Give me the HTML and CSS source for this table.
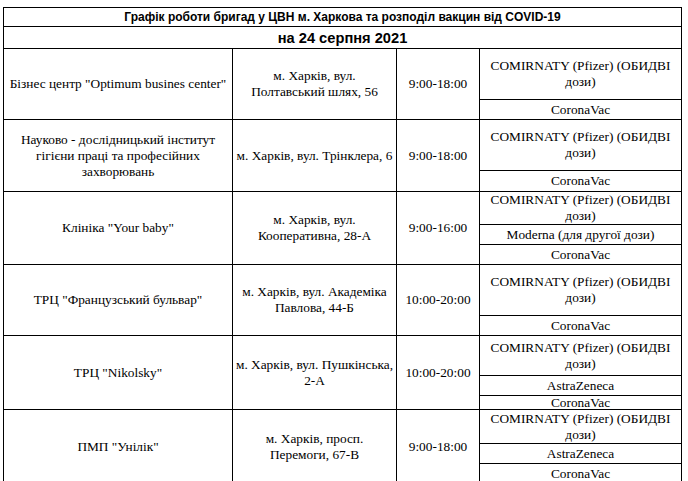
FILE: index.html
```html
<!DOCTYPE html>
<html lang="uk">
<head>
<meta charset="utf-8">
<title>Графік роботи бригад</title>
<link rel="stylesheet" href="styles.css">
</head>
<body>
<div class="sheet">
  <div class="cell title">Графік роботи бригад у ЦВН м. Харкова та розподіл вакцин від COVID-19</div>
  <div class="cell date">на 24 серпня 2021</div>

  <div class="cell s2">Бізнес центр "Optimum busines center"</div>
  <div class="cell s2">м. Харків, вул.<br>Полтавський шлях, 56</div>
  <div class="cell s2">9:00-18:00</div>
  <div class="cell">COMIRNATY (Pfizer) (ОБИДВІ дози)</div>
  <div class="cell">CoronaVac</div>

  <div class="cell s2">Науково - дослідницький інститут гігієни праці та професійних захворювань</div>
  <div class="cell s2">м. Харків, вул. Трінклера, 6</div>
  <div class="cell s2">9:00-18:00</div>
  <div class="cell">COMIRNATY (Pfizer) (ОБИДВІ дози)</div>
  <div class="cell">CoronaVac</div>

  <div class="cell s3">Клініка "Your baby"</div>
  <div class="cell s3">м. Харків, вул.<br>Кооперативна, 28-А</div>
  <div class="cell s3">9:00-16:00</div>
  <div class="cell">COMIRNATY (Pfizer) (ОБИДВІ дози)</div>
  <div class="cell">Moderna (для другої дози)</div>
  <div class="cell">CoronaVac</div>

  <div class="cell s2">ТРЦ "Французський бульвар"</div>
  <div class="cell s2">м. Харків, вул. Академіка<br>Павлова, 44-Б</div>
  <div class="cell s2">10:00-20:00</div>
  <div class="cell">COMIRNATY (Pfizer) (ОБИДВІ дози)</div>
  <div class="cell">CoronaVac</div>

  <div class="cell s3">ТРЦ "Nikolsky"</div>
  <div class="cell s3 tight">м. Харків, вул. Пушкінська,<br>2-А</div>
  <div class="cell s3">10:00-20:00</div>
  <div class="cell">COMIRNATY (Pfizer) (ОБИДВІ дози)</div>
  <div class="cell">AstraZeneca</div>
  <div class="cell">CoronaVac</div>

  <div class="cell s3">ПМП "Унілік"</div>
  <div class="cell s3">м. Харків, просп.<br>Перемоги, 67-В</div>
  <div class="cell s3">9:00-18:00</div>
  <div class="cell">COMIRNATY (Pfizer) (ОБИДВІ дози)</div>
  <div class="cell">AstraZeneca</div>
  <div class="cell">CoronaVac</div>
</div>
</body>
</html>
```
FILE: styles.css
```css
html, body {
  margin: 0;
  padding: 0;
  background: #fff;
  overflow: hidden;
}
body {
  padding: 7px 0 0 3px;
  font-family: "Liberation Serif", "DejaVu Serif", serif;
  font-size: 13.33px;
  color: #000;
}
.sheet {
  display: grid;
  grid-template-columns: 229px 164px 83px 202px;
  grid-template-rows: 19px 22px 51px 20px 51px 21px 33px 20px 20px 51px 20px 40px 20px 14px 34px 20px 21px;
  border-top: 1px solid #000;
  border-left: 1px solid #000;
  width: max-content;
}
.cell {
  box-sizing: border-box;
  border-right: 1px solid #000;
  border-bottom: 1px solid #000;
  display: flex;
  align-items: center;
  justify-content: center;
  text-align: center;
  line-height: 16px;
  padding: 0 3px;
  overflow: hidden;
}
.tight {
  padding: 0;
  white-space: nowrap;
}
.title {
  grid-column: 1 / -1;
  font-family: "Liberation Sans", Arial, sans-serif;
  font-size: 12px;
  font-weight: bold;
}
.date {
  grid-column: 1 / -1;
  font-family: "Liberation Sans", Arial, sans-serif;
  font-size: 14.67px;
  font-weight: bold;
}
.s2 { grid-row: span 2; }
.s3 { grid-row: span 3; }
```
